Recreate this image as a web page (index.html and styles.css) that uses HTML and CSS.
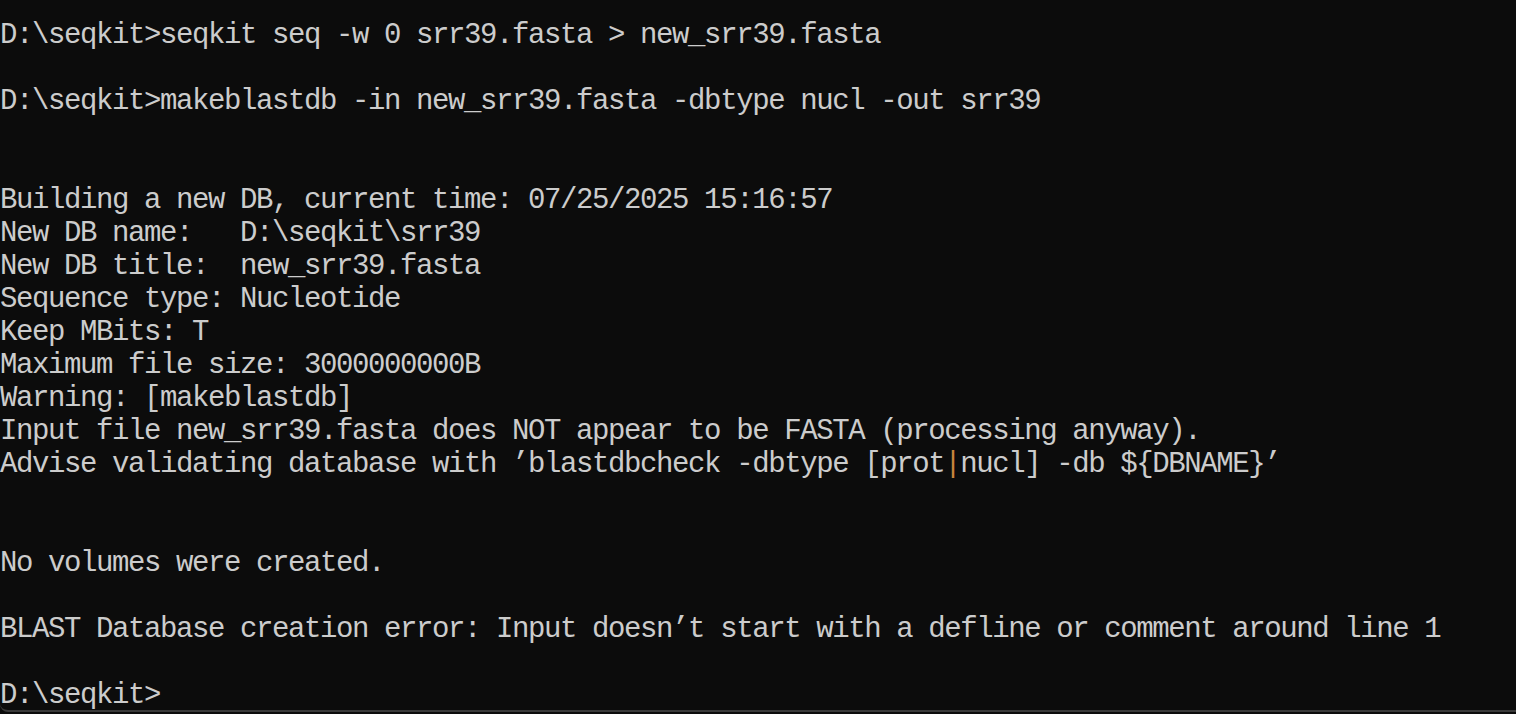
FILE: index.html
```html
<!DOCTYPE html>
<html>
<head>
<meta charset="utf-8">
<link rel="stylesheet" href="styles.css">
</head>
<body>
<div class="window">
  <div class="term">
    <div class="ln">D:\seqkit&gt;seqkit seq -w 0 srr39.fasta &gt; new_srr39.fasta</div>
    <div class="ln"></div>
    <div class="ln">D:\seqkit&gt;makeblastdb -in new_srr39.fasta -dbtype nucl -out srr39</div>
    <div class="ln"></div>
    <div class="ln"></div>
    <div class="ln">Building a new DB, current time: 07/25/2025 15:16:57</div>
    <div class="ln">New DB name:   D:\seqkit\srr39</div>
    <div class="ln">New DB title:  new_srr39.fasta</div>
    <div class="ln">Sequence type: Nucleotide</div>
    <div class="ln">Keep MBits: T</div>
    <div class="ln">Maximum file size: 3000000000B</div>
    <div class="ln">Warning: [makeblastdb]</div>
    <div class="ln">Input file new_srr39.fasta does NOT appear to be FASTA (processing anyway).</div>
    <div class="ln">Advise validating database with ’blastdbcheck -dbtype [prot<span class="pipe">|</span>nucl] -db ${DBNAME}’</div>
    <div class="ln"></div>
    <div class="ln"></div>
    <div class="ln">No volumes were created.</div>
    <div class="ln"></div>
    <div class="ln">BLAST Database creation error: Input doesn’t start with a defline or comment around line 1</div>
    <div class="ln"></div>
    <div class="ln">D:\seqkit&gt;</div>
  </div>
</div>
</body>
</html>
```

FILE: styles.css
```css
html, body {
  margin: 0;
  padding: 0;
  background: #0c0c0c;
  overflow: hidden;
}
.window {
  width: 1516px;
  height: 710px;
  background: #0c0c0c;
  border-bottom: 2px solid #3a3a3a;
  border-bottom-left-radius: 8px;
  overflow: hidden;
}
.term {
  padding-top: 19px;
  font-family: "Liberation Mono", "DejaVu Sans Mono", monospace;
  font-size: 29px;
  letter-spacing: -1.4px;
  color: #cccccc;
}
.ln {
  height: 33px;
  line-height: 33px;
  white-space: pre;
}
.pipe {
  color: #c8843c;
}
```
